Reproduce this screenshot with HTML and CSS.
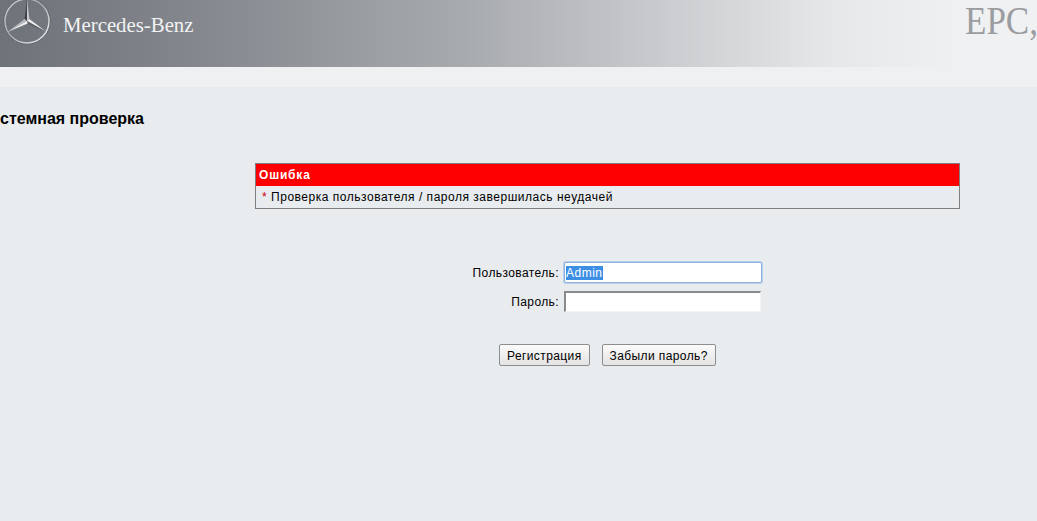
FILE: index.html
```html
<!DOCTYPE html>
<html>
<head>
    <title>EPC</title>
    <link rel="stylesheet" href="styles.css">
</head>
<body>
    <div class="header">
        <svg class="logo" width="54" height="48" viewBox="0 0 54 48">
            <defs>
                <linearGradient id="ring" x1="0" y1="0" x2="1" y2="1">
                    <stop offset="0" stop-color="#d0d2d5"/>
                    <stop offset="0.45" stop-color="#a5a8ac"/>
                    <stop offset="1" stop-color="#f4f4f4"/>
                </linearGradient>
            </defs>
            <circle cx="27" cy="23" r="23" fill="none" stroke="#54575c" stroke-width="0.8"/>
            <circle cx="27" cy="23" r="22" fill="none" stroke="url(#ring)" stroke-width="1.5"/>
            <polygon points="27,1 24.6,21 27,23" fill="#3e4146"/>
            <polygon points="27,1 29.4,21 27,23" fill="#c9cbce"/>
            <polygon points="46.5,34 29.4,21 27,23" fill="#eceded"/>
            <polygon points="46.5,34 26.4,25.4 27,23" fill="#5d6065"/>
            <polygon points="7.5,34 24.6,21 27,23" fill="#b6b9bc"/>
            <polygon points="7.5,34 27.6,25.4 27,23" fill="#f2f2f2"/>
        </svg>
        <div class="brand">Mercedes-Benz</div>
        <div class="product">EPC,</div>
    </div>
    <div class="subbar"></div>

    <div class="main">
        <h2 class="title">стемная проверка</h2>

        <div class="error-box">
            <div class="error-head">Ошибка</div>
            <div class="error-body"><span class="star">*</span> Проверка пользователя / пароля завершилась неудачей</div>
        </div>

        <form class="login" onsubmit="return false">
            <label class="login-label" for="user">Пользователь:</label>
            <input class="field field-focus" id="user" type="text" value="Admin">
            <label class="login-label" for="pass">Пароль:</label>
            <input class="field" id="pass" type="password">
            <div class="buttons">
                <button class="btn">Регистрация</button>
                <button class="btn">Забыли пароль?</button>
            </div>
        </form>
    </div>

    <script>
        // the user field comes up focused with its text selected
        var user = document.getElementById('user');
        user.focus();
        user.select();
    </script>
</body>
</html>
```

FILE: styles.css
```css
html, body {
    height: 100%;
}

body {
    margin: 0;
    overflow: hidden;
    background-color: #e9ecef;
    font-family: "Liberation Sans", Arial, sans-serif;
    font-size: 12px;
    color: #000;
}

.header {
    display: flex;
    height: 67px;
    overflow: hidden;
    background: linear-gradient(90deg, #6e7279 0%, #85888e 20%, #a8abae 45%, #cbcdd0 65%, #e6e7e9 80%, #eff0f2 92%, #f0f1f3 100%);
}

.logo {
    flex: none;
    margin-top: -2px;
}

.brand {
    margin: 13px 0 0 9px;
    font-family: "Liberation Serif", serif;
    font-size: 20.8px;
    line-height: 24px;
    color: #f2f3f3;
}

.product {
    margin: 0 0 0 auto;
    padding-top: 3px;
    width: 72px;
    flex: none;
    font-family: "Liberation Serif", serif;
    font-size: 35px;
    line-height: 40px;
    color: #9b9c9f;
    white-space: nowrap;
    transform: scaleY(1.12);
}

.subbar {
    height: 20px;
    background-color: #eff0f2;
}

.main {
    padding-top: 24px;
}

.title {
    margin: 0;
    font-size: 16px;
    line-height: 16px;
    font-weight: bold;
}

.error-box {
    width: 703px;
    margin: 36px 0 0 255px;
    border: 1px solid #7f7f7f;
}

.error-head {
    height: 22px;
    padding-left: 3px;
    background-color: #f00;
    color: #fff;
    font-weight: bold;
    line-height: 22px;
    letter-spacing: 0.8px;
}

.error-body {
    height: 22px;
    padding-left: 6px;
    line-height: 22px;
    letter-spacing: 0.52px;
}

.star {
    color: #c00;
}

.login {
    display: grid;
    grid-template-columns: 564px 198px;
    row-gap: 8px;
    margin-top: 53px;
    align-items: center;
}

.login-label {
    padding-right: 5px;
    text-align: right;
    letter-spacing: 0.4px;
}

.field {
    box-sizing: border-box;
    width: 197px;
    height: 21px;
    padding: 0 1px;
    border: 2px solid #8a8a8a;
    border-right: 1px solid #f4f4f4;
    border-bottom: 1px solid #f4f4f4;
    border-radius: 0;
    outline: none;
    background-color: #fff;
    font-family: "Liberation Sans", Arial, sans-serif;
    font-size: 12px;
    letter-spacing: 0.5px;
}

.field-focus {
    width: 198px;
    border: 1px solid #8db0dc;
    border-radius: 2px;
    box-shadow: 0 0 0 1px #b9d0ea;
}

.field::selection {
    background-color: #3d8fe6;
    color: #fff;
}

.buttons {
    grid-column: 1 / 3;
    display: flex;
    gap: 12px;
    margin: 24px 0 0 499px;
}

.btn {
    box-sizing: border-box;
    height: 22px;
    padding: 1px 7px 0;
    border: 1px solid #8e8e8e;
    border-radius: 2px;
    background: linear-gradient(#fbfbfb, #e3e3e3);
    color: #000;
    font-family: "Liberation Sans", Arial, sans-serif;
    font-size: 12px;
    letter-spacing: 0.4px;
}
```
